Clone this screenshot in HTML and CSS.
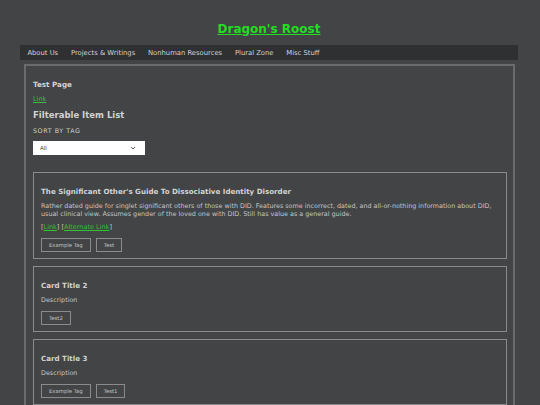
FILE: index.html
```html
<!DOCTYPE html>
<html lang="en">
<head>
<meta charset="UTF-8" />
<meta name="viewport" content="width=device-width, initial-scale=1" />
<title>Dragon's Roost - Test Page</title>
<link rel="stylesheet" href="styles.css">
</head>
<body>

<h1 class="site-title"><a href="#">Dragon's Roost</a></h1>

<nav class="top-nav">
  <a href="#">About Us</a>
  <a href="#">Projects &amp; Writings</a>
  <a href="#">Nonhuman Resources</a>
  <a href="#">Plural Zone</a>
  <a href="#">Misc Stuff</a>
</nav>

<main class="page">
  <h2 class="page-title">Test Page</h2>
  <p class="page-link"><a href="#">Link</a></p>

  <h3 class="list-title">Filterable Item List</h3>
  <label class="sort-label" for="tag-filter">Sort by tag</label>
  <div class="select-box" id="tag-filter">
    <span>All</span>
    <svg width="6" height="4" viewBox="0 0 6 4"><path d="M1 1 L3 3 L5 1" fill="none" stroke="#555" stroke-width="0.9"/></svg>
  </div>

  <div class="cards">
    <section class="card">
      <h4>The Significant Other's Guide To Dissociative Identity Disorder</h4>
      <p>Rather dated guide for singlet significant others of those with DID. Features some incorrect, dated, and all-or-nothing information about DID, usual clinical view. Assumes gender of the loved one with DID. Still has value as a general guide.</p>
      <p class="card-links">[<a href="#">Link</a>] [<a href="#">Alternate Link</a>]</p>
      <div class="tags">
        <span class="tag">Example Tag</span>
        <span class="tag">Test</span>
      </div>
    </section>

    <section class="card">
      <h4>Card Title 2</h4>
      <p>Description</p>
      <div class="tags">
        <span class="tag">Test2</span>
      </div>
    </section>

    <section class="card">
      <h4>Card Title 3</h4>
      <p>Description</p>
      <div class="tags">
        <span class="tag">Example Tag</span>
        <span class="tag">Test1</span>
      </div>
    </section>
  </div>
</main>

</body>
</html>
```

FILE: styles.css
```css
:root {
  --bg: #434446;
  --nav-bg: #2f3032;
  --text: #d2d2d2;
  --muted: #c4c4c4;
  --green: #22dd22;
  --link: #33c233;
  --border: #6b6b6b;
  --card-border: #8b8b8b;
}
body {
  margin: 0;
  padding: 0 22px 0 20px;
  background: var(--bg);
  color: var(--text);
  font-family: 'DejaVu Sans', Verdana, sans-serif;
  height: 405px;
  overflow: hidden;
}
a {
  color: var(--link);
}
.site-title {
  margin: 0;
  padding-top: 21px;
  height: 24px;
  text-align: center;
  font-size: 12px;
  line-height: 16px;
  font-weight: 700;
}
.site-title a {
  color: var(--green);
}
.top-nav {
  display: flex;
  height: 15px;
  align-items: center;
  background: var(--nav-bg);
  padding-left: 1px;
}
.top-nav a {
  color: var(--text);
  text-decoration: none;
  font-size: 6.8px;
  padding: 0 6.4px;
}
.page {
  margin: 4px 3px 0 4px;
  border: 2px solid var(--border);
  border-bottom: none;
  padding: 7px 6px 0 7px;
}
.page-title {
  margin: 7px 0 0;
  font-size: 7.2px;
  line-height: 10px;
}
.page-link {
  margin: 4px 0 0;
  font-size: 6.5px;
  line-height: 10px;
}
.list-title {
  margin: 5px 0 0;
  font-size: 8.5px;
  line-height: 12px;
}
.sort-label {
  display: block;
  margin-top: 5px;
  font-size: 6.3px;
  line-height: 10px;
  letter-spacing: 0.6px;
  text-transform: uppercase;
}
.select-box {
  margin-top: 5px;
  width: 112px;
  height: 14px;
  box-sizing: border-box;
  background: #fff;
  color: #444;
  font-size: 5.5px;
  display: flex;
  align-items: center;
  justify-content: space-between;
  padding: 0 9px 0 7px;
}
.cards {
  margin-top: 17px;
  display: flex;
  flex-direction: column;
  gap: 7px;
}
.card {
  border: 1px solid var(--card-border);
  padding: 7px 7px 6px;
}
.card h4 {
  margin: 7px 0 0;
  font-size: 7.1px;
  line-height: 10px;
}
.card p {
  margin: 5px 0 0;
  font-size: 6.4px;
  line-height: 8px;
  color: var(--muted);
}
.card p.card-links {
  margin-top: 5px;
  font-size: 6.5px;
}
.tags {
  display: flex;
  gap: 5px;
  margin-top: 7px;
}
.tag {
  border: 1px solid var(--card-border);
  font-size: 5.3px;
  line-height: 12px;
  padding: 0 7px;
  color: var(--muted);
}
```
